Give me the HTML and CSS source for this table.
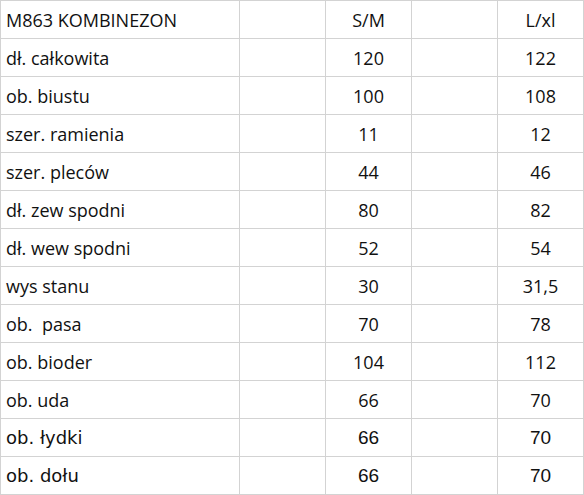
FILE: index.html
```html
<!DOCTYPE html>
<html lang="pl">
<head>
<meta charset="utf-8">
<title>M863 KOMBINEZON</title>
<link rel="stylesheet" href="styles.css">
</head>
<body>
<table class="sizes">
  <colgroup>
    <col class="c-label"><col class="c-gap"><col class="c-val"><col class="c-gap"><col class="c-val">
  </colgroup>
  <tbody>
    <tr><td class="label">M863 KOMBINEZON</td><td></td><td class="val">S/M</td><td></td><td class="val">L/xl</td></tr>
    <tr><td class="label">dł. całkowita</td><td></td><td class="val">120</td><td></td><td class="val">122</td></tr>
    <tr><td class="label">ob. biustu</td><td></td><td class="val">100</td><td></td><td class="val">108</td></tr>
    <tr><td class="label">szer. ramienia</td><td></td><td class="val">11</td><td></td><td class="val">12</td></tr>
    <tr><td class="label">szer. pleców</td><td></td><td class="val">44</td><td></td><td class="val">46</td></tr>
    <tr><td class="label">dł. zew spodni</td><td></td><td class="val">80</td><td></td><td class="val">82</td></tr>
    <tr><td class="label">dł. wew spodni</td><td></td><td class="val">52</td><td></td><td class="val">54</td></tr>
    <tr><td class="label">wys stanu</td><td></td><td class="val">30</td><td></td><td class="val">31,5</td></tr>
    <tr><td class="label">ob.&nbsp; pasa</td><td></td><td class="val">70</td><td></td><td class="val">78</td></tr>
    <tr><td class="label">ob. bioder</td><td></td><td class="val">104</td><td></td><td class="val">112</td></tr>
    <tr><td class="label">ob. uda</td><td></td><td class="val">66</td><td></td><td class="val">70</td></tr>
    <tr class="alt"><td class="label">ob. łydki</td><td></td><td class="val">66</td><td></td><td class="val">70</td></tr>
    <tr class="alt"><td class="label">ob. dołu</td><td></td><td class="val">66</td><td></td><td class="val">70</td></tr>
  </tbody>
</table>
</body>
</html>
```

FILE: styles.css
```css
html, body {
  margin: 0;
  padding: 0;
  background: #ffffff;
}

.sizes {
  border-collapse: collapse;
  table-layout: fixed;
  width: 584px;
  font-family: "Open Sans", "Noto Sans", sans-serif;
  font-size: 18px;
  color: #111111;
}

.c-label { width: 239px; }
.c-gap { width: 86px; }
.c-val { width: 86px; }

.sizes td {
  border: 1px solid #d3d3d3;
  height: 38px;
  padding: 0 5px;
  vertical-align: middle;
  line-height: 20px;
  box-sizing: border-box;
}

.sizes td.label {
  text-align: left;
}

.sizes td.val {
  text-align: center;
}

.sizes tr.alt td {
  font-family: "DejaVu Sans", "Liberation Sans", sans-serif;
  font-size: 18px;
}

.sizes tr.alt td.val {
  font-family: "Liberation Sans", Arial, sans-serif;
  font-size: 19px;
}
```
